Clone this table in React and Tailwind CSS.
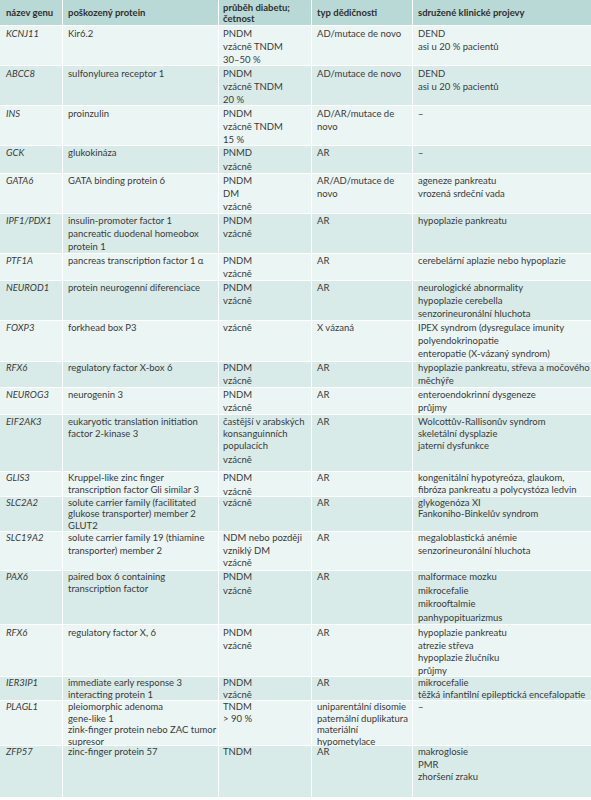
import React from 'react';

// column widths, left to right; the last one takes what is left
const COLS = ['w-[62px] pl-[6px]', 'w-[155px] pl-[5px]', 'w-[92px] pl-[4px]', 'w-[100px] pl-[5px]', 'flex-1 pl-[5px]'];

const HEAD = ['název genu', 'poškozený protein', 'průběh diabetu;\nčetnost', 'typ dědičnosti', 'sdružené klinické projevy'];

// c: row height + line height, p: top padding of cells, g: gap between separate items
const ROWS = [
  { c: 'h-[39px] leading-[13px]', p: 'pt-px', g: 'gap-0', gene: 'KCNJ11', cells: [['Kir6.2'], ['PNDM', 'vzácně TNDM', '30–50 %'], ['AD/mutace de novo'], ['DEND', 'asi u 20 % pacientů']] },
  { c: 'h-[39px] leading-[13px]', p: 'pt-px', g: 'gap-0', gene: 'ABCC8', cells: [['sulfonylurea receptor 1'], ['PNDM', 'vzácně TNDM', '20 %'], ['AD/mutace de novo'], ['DEND', 'asi u 20 % pacientů']] },
  { c: 'h-[39px] leading-[13px]', p: 'pt-px', g: 'gap-0', gene: 'INS', cells: [['proinzulin'], ['PNDM', 'vzácně TNDM', '15 %'], ['AD/AR/mutace de\nnovo'], ['–']] },
  { c: 'h-[27px] leading-[13px]', p: 'pt-0', g: 'gap-px', gene: 'GCK', cells: [['glukokináza'], ['PNMD', 'vzácně'], ['AR'], ['–']] },
  { c: 'h-[39px] leading-[13px]', p: 'pt-0', g: 'gap-0', gene: 'GATA6', cells: [['GATA binding protein 6'], ['PNDM', 'DM', 'vzácně'], ['AR/AD/mutace de\nnovo'], ['ageneze pankreatu', 'vrozená srdeční vada']] },
  { c: 'h-[39px] leading-[13px]', p: 'pt-0', g: 'gap-0', gene: 'IPF1/PDX1', cells: [['insulin-promoter factor 1', 'pancreatic duodenal homeobox', 'protein 1'], ['PNDM', 'vzácně'], ['AR'], ['hypoplazie pankreatu']] },
  { c: 'h-[26px] leading-[13px]', p: 'pt-0', g: 'gap-0', gene: 'PTF1A', cells: [['pancreas transcription factor 1 α'], ['PNDM', 'vzácně'], ['AR'], ['cerebelární aplazie nebo hypoplazie']] },
  { c: 'h-[39px] leading-[13px]', p: 'pt-0', g: 'gap-0', gene: 'NEUROD1', cells: [['protein neurogenní diferenciace'], ['PNDM', 'vzácně'], ['AR'], ['neurologické abnormality', 'hypoplazie cerebella', 'senzorineuronální hluchota']] },
  { c: 'h-[40px] leading-[13px]', p: 'pt-0', g: 'gap-0', gene: 'FOXP3', cells: [['forkhead box P3'], ['vzácně'], ['X vázaná'], ['IPEX syndrom (dysregulace imunity', 'polyendokrinopatie', 'enteropatie (X-vázaný syndrom)']] },
  { c: 'h-[25px] leading-[12.5px]', p: 'pt-0', g: 'gap-0', gene: 'RFX6', cells: [['regulatory factor X-box 6'], ['PNDM', 'vzácně'], ['AR'], ['hypoplazie pankreatu, střeva a močového\nměchýře']] },
  { c: 'h-[26px] leading-[13px]', p: 'pt-0', g: 'gap-0', gene: 'NEUROG3', cells: [['neurogenin 3'], ['PNDM', 'vzácně'], ['AR'], ['enteroendokrinní dysgeneze', 'průjmy']] },
  { c: 'h-[56px] leading-[12px]', p: 'pt-px', g: 'gap-[2px]', gene: 'EIF2AK3', cells: [['eukaryotic translation initiation\nfactor 2-kinase 3'], ['častější v arabských\nkonsanguinních\npopulacích', 'vzácně'], ['AR'], ['Wolcottův-Rallisonův syndrom\nskeletální dysplazie\njaterní dysfunkce']] },
  { c: 'h-[24px] leading-[12px]', p: 'pt-0', g: 'gap-[1.5px]', gene: 'GLIS3', cells: [['Kruppel-like zinc finger\ntranscription factor Gli similar 3'], ['PNDM', 'vzácně'], ['AR'], ['kongenitální hypotyreóza, glaukom,\nfibróza pankreatu a polycystóza ledvin']] },
  { c: 'h-[34px] leading-[11px]', p: 'pt-0', g: 'gap-px', gene: 'SLC2A2', cells: [['solute carrier family (facilitated\nglukose transporter) member 2', 'GLUT2'], ['vzácně'], ['AR'], ['glykogenóza XI\nFankoniho-Binkelův syndrom']] },
  { c: 'h-[38px] leading-[12.5px]', p: 'pt-0', g: 'gap-0', gene: 'SLC19A2', cells: [['solute carrier family 19 (thiamine\ntransporter) member 2'], ['NDM nebo později\nvzniklý DM', 'vzácně'], ['AR'], ['megaloblastická anémie', 'senzorineuronální hluchota']] },
  { c: 'h-[53px] leading-[12px]', p: 'pt-0', g: 'gap-[1.5px]', gene: 'PAX6', cells: [['paired box 6 containing\ntranscription factor'], ['PNDM', 'vzácně'], ['AR'], ['malformace mozku', 'mikrocefalie', 'mikrooftalmie', 'panhypopituarizmus']] },
  { c: 'h-[51px] leading-[12.5px]', p: 'pt-[2px]', g: 'gap-0', gene: 'RFX6', cells: [['regulatory factor X, 6'], ['PNDM', 'vzácně'], ['AR'], ['hypoplazie pankreatu', 'atrezie střeva', 'hypoplazie žlučníku', 'průjmy']] },
  { c: 'h-[23px] leading-[11.5px]', p: 'pt-0', g: 'gap-0', gene: 'IER3IP1', cells: [['immediate early response 3\ninteracting protein 1'], ['PNDM', 'vzácně'], ['AR'], ['mikrocefalie', 'těžká infantilní epileptická encefalopatie']] },
  { c: 'h-[44px] leading-[11.5px]', p: 'pt-0', g: 'gap-0', gene: 'PLAGL1', cells: [['pleiomorphic adenoma\ngene-like 1', 'zink-finger protein nebo ZAC tumor\nsupresor'], ['TNDM', '> 90 %'], ['uniparentální disomie', 'paternální duplikatura', 'materiální\nhypometylace'], ['–']] },
  { c: 'h-[51px] leading-[12.5px]', p: 'pt-0', g: 'gap-0', gene: 'ZFP57', cells: [['zinc-finger protein 57'], ['TNDM'], ['AR'], ['makroglosie', 'PMR', 'zhoršení zraku']] },
];

const Cell = ({ col, bg, p, g, children }) => (
  <div className={`${COLS[col]} ${bg} ${p} shrink-0 flex flex-col ${g}`}>{children}</div>
);

const App = () => (
  <div className="w-[591px] min-h-[800px] bg-white text-[9.5px] text-[#3a3a3a]" style={{ fontFamily: 'Lato, "Open Sans", sans-serif' }}>
    <div className="flex flex-col gap-px">
      <div className="flex gap-px h-[25px] leading-[11px] font-bold text-[#2f2f2f]">
        {HEAD.map((h, j) => (
          <div key={j} className={`${COLS[j]} shrink-0 bg-[#b9d9d6] flex items-center whitespace-pre`}>{h}</div>
        ))}
      </div>
      {ROWS.map((r, i) => {
        const bg = i % 2 === 0 ? 'bg-[#ebf5f4]' : 'bg-[#d8ebe9]';
        return (
          <div key={i} className={`flex gap-px ${r.c}`}>
            <Cell col={0} bg={bg} p={r.p} g={r.g}>
              <div className="italic whitespace-pre">{r.gene}</div>
            </Cell>
            {r.cells.map((items, j) => (
              <Cell key={j} col={j + 1} bg={bg} p={r.p} g={r.g}>
                {items.map((t, k) => (
                  <div key={k} className="whitespace-pre">{t}</div>
                ))}
              </Cell>
            ))}
          </div>
        );
      })}
    </div>
  </div>
);

export default App;
